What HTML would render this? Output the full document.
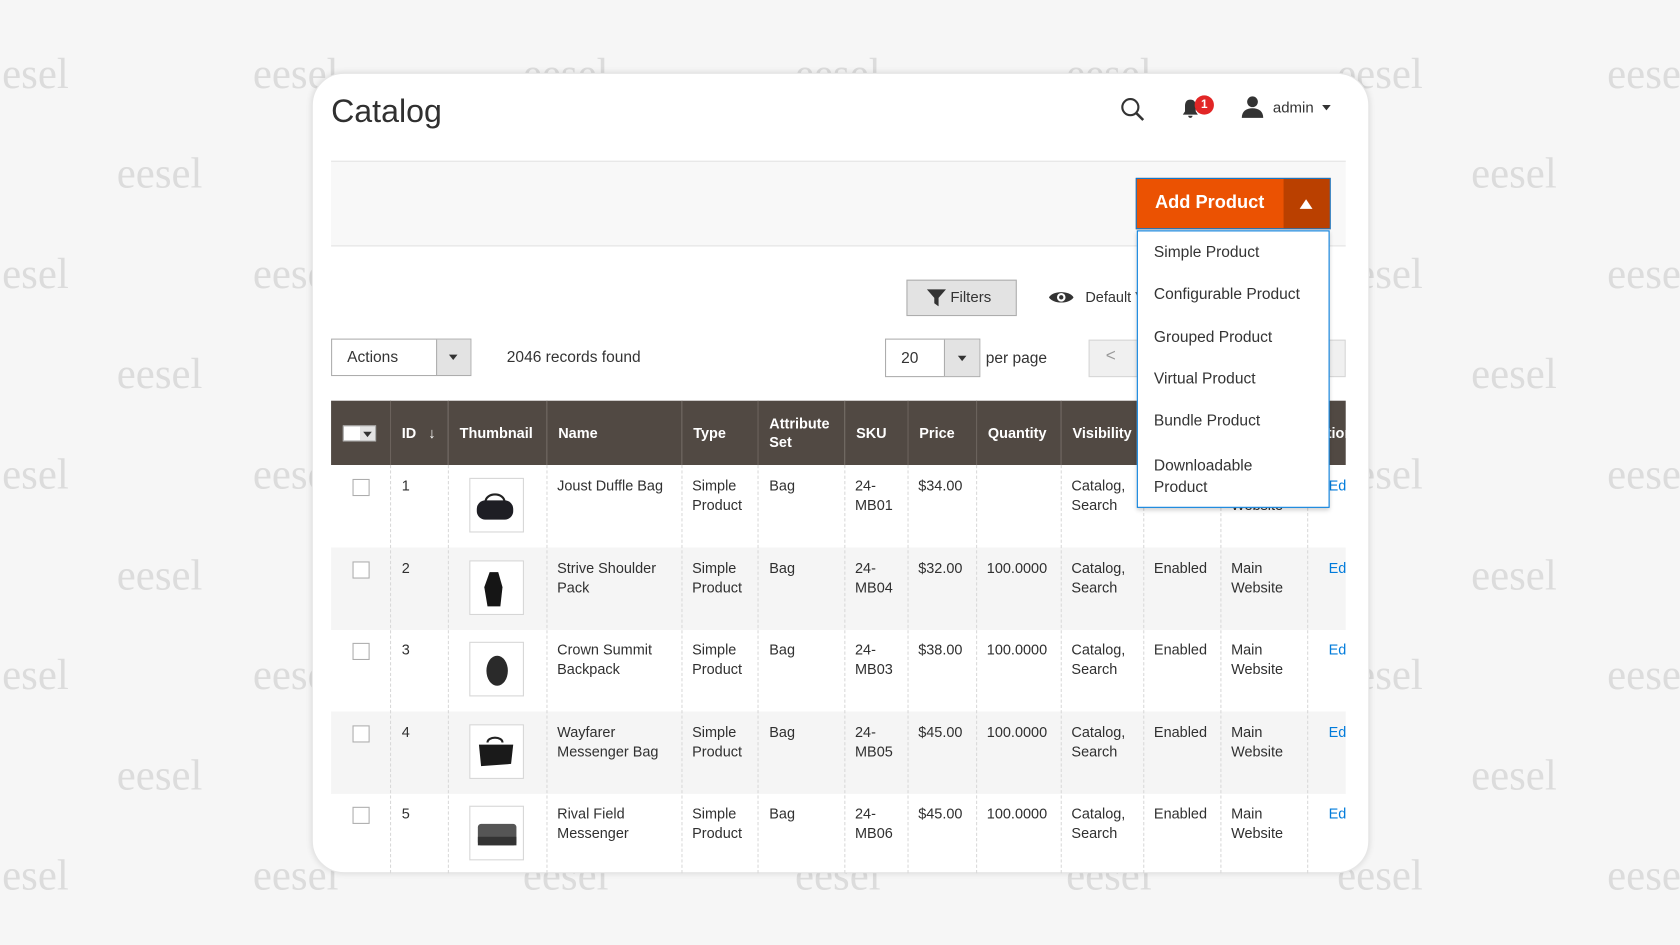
<!DOCTYPE html>
<html><head><meta charset="utf-8"><style>
*{box-sizing:border-box;margin:0;padding:0}
html,body{width:1680px;height:945px;overflow:hidden;background:#f6f6f6}
#s{position:absolute;left:0;top:0;width:1568px;height:882px;transform:scale(1.07143);transform-origin:0 0;font-family:"Liberation Sans",sans-serif;color:#303030}
.wm{position:absolute;font-family:"Liberation Serif",serif;font-size:40px;color:#dcdcdc}
.card{position:absolute;left:291px;top:68px;width:987px;height:747px;background:#fff;border-radius:30px;box-shadow:0 0 6px rgba(0,0,0,.12);border:1px solid #e6e6e6;overflow:hidden}
.a{position:absolute}
.th{position:absolute;top:374px;height:60px;background:#514943;color:#fff;font-weight:bold;font-size:13.5px;display:flex;align-items:center;padding-left:10px;border-left:1px solid #6b625c;line-height:17px}
.row{position:absolute;left:309px;width:947px}
.cell{position:absolute;font-size:13.5px;line-height:18px;color:#303030}
.vl{position:absolute;top:434px;height:381px;border-left:1px dashed #d9d9d9}
.cb{position:absolute;width:16px;height:16px;border:1px solid #adadad;background:#fff}
.tn{position:absolute;width:51px;height:51px;border:1px solid #d6d6d6;background:#fff}
.dd div{position:absolute;left:15px;font-size:14.5px;color:#333}
</style></head><body><div id="s">
<!-- watermarks -->
<div class="wm" style="left:2px;top:45px">esel</div><div class="wm" style="left:236px;top:45px">eesel</div><div class="wm" style="left:488px;top:45px">eesel</div><div class="wm" style="left:742px;top:45px">eesel</div><div class="wm" style="left:995px;top:45px">eesel</div><div class="wm" style="left:1248px;top:45px">eesel</div><div class="wm" style="left:1500px;top:45px">eese</div>
<div class="wm" style="left:109px;top:138px">eesel</div><div class="wm" style="left:1373px;top:138px">eesel</div>
<div class="wm" style="left:2px;top:232px">esel</div><div class="wm" style="left:236px;top:232px">eesel</div><div class="wm" style="left:1248px;top:232px">eesel</div><div class="wm" style="left:1500px;top:232px">eese</div>
<div class="wm" style="left:109px;top:325px">eesel</div><div class="wm" style="left:1373px;top:325px">eesel</div>
<div class="wm" style="left:2px;top:419px">esel</div><div class="wm" style="left:236px;top:419px">eesel</div><div class="wm" style="left:1248px;top:419px">eesel</div><div class="wm" style="left:1500px;top:419px">eese</div>
<div class="wm" style="left:109px;top:513px">eesel</div><div class="wm" style="left:1373px;top:513px">eesel</div>
<div class="wm" style="left:2px;top:606px">esel</div><div class="wm" style="left:236px;top:606px">eesel</div><div class="wm" style="left:1248px;top:606px">eesel</div><div class="wm" style="left:1500px;top:606px">eese</div>
<div class="wm" style="left:109px;top:700px">eesel</div><div class="wm" style="left:1373px;top:700px">eesel</div>
<div class="wm" style="left:2px;top:793px">esel</div><div class="wm" style="left:236px;top:793px">eesel</div><div class="wm" style="left:488px;top:793px">eesel</div><div class="wm" style="left:742px;top:793px">eesel</div><div class="wm" style="left:995px;top:793px">eesel</div><div class="wm" style="left:1248px;top:793px">eesel</div><div class="wm" style="left:1500px;top:793px">eese</div>
<div class="card"></div>
<div class="a" style="left:309px;top:88px;font-size:30px;color:#303030">Catalog</div>
<svg class="a" style="left:1045px;top:90px" width="24" height="24" viewBox="0 0 24 24"><circle cx="10" cy="10" r="7.5" fill="none" stroke="#333" stroke-width="2"/><path d="M15.5 15.5L22 22" stroke="#333" stroke-width="2.4"/></svg>
<svg class="a" style="left:1102px;top:92px" width="18" height="20" viewBox="0 0 18 20"><path d="M9 1C5 1 4 4 4 7v5L2 15h14l-2-3V7c0-3-1-6-5-6z M7 16a2 2 0 004 0z" fill="#333"/></svg>
<div class="a" style="left:1115px;top:89px;width:18px;height:18px;border-radius:9px;background:#e22626;color:#fff;font-size:11px;font-weight:bold;text-align:center;line-height:18px">1</div>
<svg class="a" style="left:1158px;top:89px" width="22" height="22" viewBox="0 0 22 22"><circle cx="11" cy="6" r="5" fill="#333"/><path d="M1 21c0-6 4-9 10-9s10 3 10 9z" fill="#333"/></svg>
<div class="a" style="left:1188px;top:92px;font-size:14px;color:#333">admin</div>
<div class="a" style="left:1234px;top:98px;border:4px solid transparent;border-top:5px solid #333"></div>
<div class="a" style="left:309px;top:150px;width:947px;height:80px;background:#f8f8f8;border-top:1px solid #e3e3e3;border-bottom:1px solid #e3e3e3"></div>
<div class="a" style="left:1060px;top:166px;width:182px;height:48px;border:1px solid #007bdb;background:#eb5202"></div>
<div class="a" style="left:1198px;top:167px;width:43px;height:46px;background:#ba4000"></div>
<div class="a" style="left:1078px;top:179px;color:#fff;font-size:17px;font-weight:bold">Add Product</div>
<div class="a" style="left:1213px;top:186px;border:6px solid transparent;border-bottom:9px solid #fff;border-top:0"></div>
<div class="a dd" style="left:1061px;top:215px;width:180px;height:259px;background:#fff;border:1px solid #007bdb;box-shadow:0 2px 4px rgba(0,0,0,.2);z-index:5">
<div style="top:12px">Simple Product</div><div style="top:51px">Configurable Product</div><div style="top:91px">Grouped Product</div><div style="top:130px">Virtual Product</div><div style="top:169px">Bundle Product</div><div style="top:209px;line-height:20px">Downloadable<br>Product</div></div>
<div class="a" style="left:846px;top:261px;width:103px;height:34px;background:#e3e3e3;border:1px solid #adadad"></div>
<svg class="a" style="left:865px;top:270px" width="18" height="16" viewBox="0 0 18 16"><path d="M0 0h18L11 8v8L7 13V8z" fill="#333"/></svg>
<div class="a" style="left:887px;top:269px;font-size:14px;color:#333">Filters</div>
<svg class="a" style="left:978px;top:269px" width="25" height="17" viewBox="0 0 25 17"><path d="M1 8.5C5 2 20 2 24 8.5 20 15 5 15 1 8.5z" fill="#333"/><circle cx="12.5" cy="8.5" r="4" fill="#fff"/><circle cx="12.5" cy="8.5" r="2" fill="#333"/></svg>
<div class="a" style="left:1013px;top:270px;font-size:13.5px;color:#333;width:48px;overflow:hidden;white-space:nowrap">Default View</div>
<div class="a" style="left:309px;top:316px;width:131px;height:35px;border:1px solid #adadad;background:#fff"></div>
<div class="a" style="left:407px;top:317px;width:32px;height:33px;background:#e3e3e3;border-left:1px solid #adadad"></div>
<div class="a" style="left:419px;top:331px;border:4px solid transparent;border-top:5px solid #333"></div>
<div class="a" style="left:324px;top:326px;font-size:14.5px;color:#333">Actions</div>
<div class="a" style="left:473px;top:326px;font-size:14.5px;color:#333">2046 records found</div>
<div class="a" style="left:826px;top:316px;width:89px;height:36px;border:1px solid #adadad;background:#fff"></div>
<div class="a" style="left:881px;top:317px;width:33px;height:34px;background:#e3e3e3;border-left:1px solid #adadad"></div>
<div class="a" style="left:894px;top:332px;border:4px solid transparent;border-top:5px solid #333"></div>
<div class="a" style="left:841px;top:327px;font-size:14.5px;color:#333">20</div>
<div class="a" style="left:920px;top:327px;font-size:14.5px;color:#333">per page</div>
<div class="a" style="left:1016px;top:317px;width:46px;height:35px;background:#f0f0f0;border:1px solid #d6d6d6"></div>
<div class="a" style="left:1032px;top:324px;font-size:16px;color:#999">&lt;</div>
<div class="a" style="left:1240px;top:317px;width:16px;height:35px;background:#f0f0f0;border:1px solid #d6d6d6"></div>
<!-- header -->
<div class="th" style="left:309px;width:55px;border-left:0"><span style="display:inline-block;width:31px;height:15px;background:#fff;border:1px solid #adadad;position:relative;margin-left:1px"><span style="position:absolute;right:0;top:0;width:14px;height:13px;background:#e3e3e3"></span><span style="position:absolute;right:3px;top:5px;border:4px solid transparent;border-top:5px solid #333"></span></span></div>
<div class="th" style="left:364px;width:54px">ID&nbsp;&nbsp;&nbsp;↓</div>
<div class="th" style="left:418px;width:92px">Thumbnail</div>
<div class="th" style="left:510px;width:126px">Name</div>
<div class="th" style="left:636px;width:71px">Type</div>
<div class="th" style="left:707px;width:81px">Attribute<br>Set</div>
<div class="th" style="left:788px;width:59px">SKU</div>
<div class="th" style="left:847px;width:64px">Price</div>
<div class="th" style="left:911px;width:79px">Quantity</div>
<div class="th" style="left:990px;width:77px">Visibility</div>
<div class="th" style="left:1067px;width:72px">Status</div>
<div class="th" style="left:1139px;width:81px">Websites</div>
<div class="th" style="left:1220px;width:36px;overflow:hidden;padding-left:0">Action</div>
<!-- rows -->
<div class="row" style="top:511px;height:77px;background:#f5f5f5"></div>
<div class="row" style="top:664px;height:77px;background:#f5f5f5"></div>
<div class="vl" style="left:364px"></div><div class="vl" style="left:418px"></div><div class="vl" style="left:510px"></div><div class="vl" style="left:636px"></div><div class="vl" style="left:707px"></div><div class="vl" style="left:788px"></div><div class="vl" style="left:847px"></div><div class="vl" style="left:911px"></div><div class="vl" style="left:990px"></div><div class="vl" style="left:1067px"></div><div class="vl" style="left:1139px"></div><div class="vl" style="left:1220px"></div>
<div id="rows"></div>
<script>
var d=[["1","Joust Duffle Bag","MB01","$34.00",""],["2","Strive Shoulder<br>Pack","MB04","$32.00","100.0000"],["3","Crown Summit<br>Backpack","MB03","$38.00","100.0000"],["4","Wayfarer<br>Messenger Bag","MB05","$45.00","100.0000"],["5","Rival Field<br>Messenger","MB06","$45.00","100.0000"]];
var shapes=['<path d="M14 22c0-10 18-10 18 0" fill="none" stroke="#222" stroke-width="2"/><rect x="6" y="20" width="34" height="18" rx="8" fill="#1e1e24"/>','<path d="M18 10h8l4 14-2 18h-12l-3-18z" fill="#151515"/>','<ellipse cx="25" cy="26" rx="10" ry="14" fill="#2a2a2a"/>','<path d="M16 16c0-6 14-6 14 0" fill="none" stroke="#222" stroke-width="2"/><path d="M8 18h32l-2 18-28 2z" fill="#1a1a1a"/>','<rect x="7" y="16" width="36" height="20" rx="3" fill="#555"/><rect x="7" y="28" width="36" height="8" fill="#333"/>'];
var h='';
d.forEach(function(r,i){var t=434+i*76.5,y=t+11;
h+='<div class="cb" style="left:329px;top:'+(t+13)+'px"></div>';
h+='<div class="cell" style="left:375px;top:'+y+'px">'+r[0]+'</div>';
h+='<div class="tn" style="left:438px;top:'+(t+12)+'px"><svg width="49" height="49" viewBox="0 0 49 49">'+shapes[i]+'</svg></div>';
h+='<div class="cell" style="left:520px;top:'+y+'px">'+r[1]+'</div>';
h+='<div class="cell" style="left:646px;top:'+y+'px">Simple<br>Product</div>';
h+='<div class="cell" style="left:718px;top:'+y+'px">Bag</div>';
h+='<div class="cell" style="left:798px;top:'+y+'px">24-<br>'+r[2]+'</div>';
h+='<div class="cell" style="left:857px;top:'+y+'px">'+r[3]+'</div>';
h+='<div class="cell" style="left:921px;top:'+y+'px">'+r[4]+'</div>';
h+='<div class="cell" style="left:1000px;top:'+y+'px">Catalog,<br>Search</div>';
h+='<div class="cell" style="left:1077px;top:'+y+'px">Enabled</div>';
h+='<div class="cell" style="left:1149px;top:'+y+'px">Main<br>Website</div>';
h+='<div class="cell" style="left:1240px;top:'+y+'px;color:#007bdb;width:16px;overflow:hidden">Edit</div>';});
document.getElementById('rows').innerHTML=h;
</script>
</div></body></html>
